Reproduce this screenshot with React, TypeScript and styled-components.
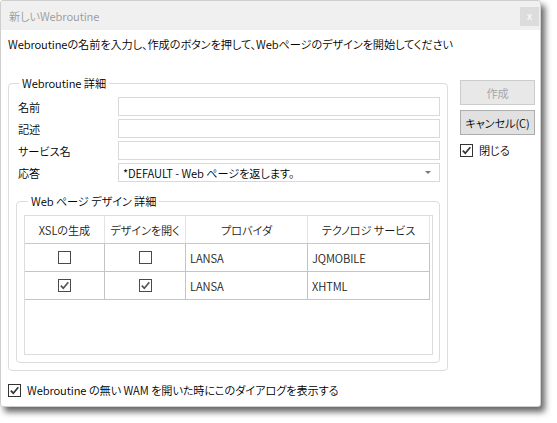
import React from 'react';
import styled, { createGlobalStyle } from 'styled-components';

const Global = createGlobalStyle`
  html, body { margin: 0; padding: 0; background: #fff; }
  body {
    font-family: "Noto Sans CJK JP", "Noto Sans", sans-serif;
    font-size: 11.2px;
    font-weight: 350;
    letter-spacing: -0.1px;
    color: #000;
    font-feature-settings: "palt";
  }
  * { box-sizing: border-box; }
`;

const Page = styled.div`
  width: 557px;
  height: 423px;
  background: #fff;
`;

const Window = styled.div`
  width: 541px;
  height: 407px;
  background: #fff;
  border: 1px solid #cfcfcf;
  border-radius: 3px;
  box-shadow: 4px 5px 6px rgba(0, 0, 0, 0.6);
  display: flex;
  flex-direction: column;
  overflow: hidden;
`;

const TitleBar = styled.div`
  height: 29px;
  background: #f0f0f0;
  display: flex;
  align-items: center;
  padding-left: 8px;
  flex-shrink: 0;
`;

const Title = styled.span`
  color: #9a9a9a;
  line-height: 16px;
`;

const CloseBtn = styled.div`
  margin-left: auto;
  margin-right: 1px;
  margin-top: 2px;
  width: 19px;
  height: 19px;
  background: #dcdcdc;
  color: #f6f6f6;
  font-size: 10px;
  font-family: "Liberation Sans", sans-serif;
  font-weight: bold;
  display: flex;
  align-items: center;
  justify-content: center;
`;

const Body = styled.div`
  display: flex;
  flex-direction: column;
  padding: 6px 0 0 7px;
`;

const Instruction = styled.div`
  line-height: 16px;
  white-space: nowrap;
`;

const MainRow = styled.div`
  display: flex;
  align-items: flex-start;
  gap: 12px;
  margin-top: 23px;
`;

const Group = styled.fieldset<{ $w?: number }>`
  margin: 0;
  min-width: 0;
  border: 1px solid #dcdcdc;
  border-radius: 4px;
  padding: 0 7px 7px 7px;
  ${(p) => (p.$w ? `width: ${p.$w}px;` : '')}
`;

const InnerGroup = styled(Group)`
  margin-top: 11px;
  padding: 0 6px 7px 7px;
`;

const Legend = styled.legend<{ $ml: number }>`
  padding: 0 3px;
  margin-left: ${(p) => p.$ml}px;
  line-height: 16px;
`;

const Fields = styled.div`
  display: flex;
  flex-direction: column;
  gap: 3px;
  padding-top: 6px;
`;

const FieldRow = styled.div`
  display: flex;
  align-items: center;
`;

const Label = styled.div`
  width: 102px;
  padding-left: 2px;
  line-height: 16px;
`;

const TextBox = styled.div`
  flex: 1;
  height: 19px;
  border: 1px solid #d9d9d9;
  background: #fff;
`;

const Select = styled.div`
  flex: 1;
  height: 19px;
  border: 1px solid #d9d9d9;
  background: #fff;
  display: flex;
  align-items: center;
  padding: 0 8px 0 4px;
`;

const SelectText = styled.span`
  flex: 1;
  line-height: 16px;
  white-space: nowrap;
`;

const Arrow = styled.span`
  width: 0;
  height: 0;
  border-left: 3px solid transparent;
  border-right: 3px solid transparent;
  border-top: 3px solid #7a7a7a;
`;

const List = styled.div`
  height: 140px;
  margin-top: 6px;
  border: 1px solid #dcdcdc;
  background: #fff;
  display: flex;
  flex-direction: column;
`;

const GridRow = styled.div<{ $header?: boolean }>`
  display: grid;
  grid-template-columns: 80px 81px 122px 122px;
  height: 28px;
  border-bottom: 1px solid ${(p) => (p.$header ? '#c8c8c8' : '#c4c4c4')};
  width: 405px;
`;

const HeadCell = styled.div`
  display: flex;
  align-items: center;
  justify-content: center;
  border-right: 1px solid #e4e4e4;
  line-height: 16px;
  color: #1a1a1a;
`;

const Cell = styled.div<{ $center?: boolean }>`
  display: flex;
  align-items: center;
  justify-content: ${(p) => (p.$center ? 'center' : 'flex-start')};
  padding-left: ${(p) => (p.$center ? '0' : '4px')};
  border-right: 1px solid #c4c4c4;
  line-height: 16px;
  color: #1a1a1a;
`;

const Side = styled.div`
  display: flex;
  flex-direction: column;
  padding-top: 5px;
`;

const Button = styled.div<{ $disabled?: boolean }>`
  width: 75px;
  height: 25px;
  display: flex;
  align-items: center;
  justify-content: center;
  background: ${(p) => (p.$disabled ? '#e8e8e8' : '#e1e1e1')};
  border: 1px solid ${(p) => (p.$disabled ? '#cccccc' : '#adadad')};
  color: ${(p) => (p.$disabled ? '#a3a3a3' : '#000')};
  line-height: 16px;
  & + & {
    margin-top: 5px;
  }
`;

const CheckRow = styled.div<{ $mt: number }>`
  display: flex;
  align-items: center;
  height: 16px;
  margin-top: ${(p) => p.$mt}px;
  gap: 6px;
  line-height: 16px;
  white-space: nowrap;
`;

const Box = styled.span<{ $soft?: boolean }>`
  width: 13px;
  height: 13px;
  border: 1px solid ${(p) => (p.$soft ? '#4a4a4a' : '#333')};
  background: #fff;
  display: inline-flex;
  flex-shrink: 0;
`;

function Check({ checked, soft }: { checked?: boolean; soft?: boolean }) {
  return (
    <Box $soft={soft}>
      {checked && (
        <svg width="11" height="11" viewBox="0 0 11 11">
          <path
            d="M1.8 5.6 L4.3 8.2 L9.3 2.3"
            fill="none"
            stroke={soft ? '#555' : '#333'}
            strokeWidth="1.7"
          />
        </svg>
      )}
    </Box>
  );
}

const rows = [
  { xsl: false, open: false, provider: 'LANSA', tech: 'JQMOBILE' },
  { xsl: true, open: true, provider: 'LANSA', tech: 'XHTML' },
];

export default function App() {
  return (
    <Page>
      <Global />
      <Window>
        <TitleBar>
          <Title>新しいWebroutine</Title>
          <CloseBtn>x</CloseBtn>
        </TitleBar>
        <Body>
          <Instruction>
            Webroutineの名前を入力し、作成のボタンを押して、Webページのデザインを開始してください
          </Instruction>
          <MainRow>
            <Group $w={440}>
              <Legend $ml={3}>Webroutine 詳細</Legend>
              <Fields>
                <FieldRow>
                  <Label>名前</Label>
                  <TextBox />
                </FieldRow>
                <FieldRow>
                  <Label>記述</Label>
                  <TextBox />
                </FieldRow>
                <FieldRow>
                  <Label>サービス名</Label>
                  <TextBox />
                </FieldRow>
                <FieldRow>
                  <Label>応答</Label>
                  <Select>
                    <SelectText>*DEFAULT - Web ページを返します。</SelectText>
                    <Arrow />
                  </Select>
                </FieldRow>
              </Fields>
              <InnerGroup>
                <Legend $ml={4}>Web ページ デザイン 詳細</Legend>
                <List>
                  <GridRow $header>
                    <HeadCell>XSLの生成</HeadCell>
                    <HeadCell>デザインを開く</HeadCell>
                    <HeadCell>プロバイダ</HeadCell>
                    <HeadCell>テクノロジ サービス</HeadCell>
                  </GridRow>
                  {rows.map((r, i) => (
                    <GridRow key={i}>
                      <Cell $center>
                        <Check checked={r.xsl} soft />
                      </Cell>
                      <Cell $center>
                        <Check checked={r.open} soft />
                      </Cell>
                      <Cell>{r.provider}</Cell>
                      <Cell>{r.tech}</Cell>
                    </GridRow>
                  ))}
                </List>
              </InnerGroup>
            </Group>
            <Side>
              <Button $disabled>作成</Button>
              <Button>キャンセル(C)</Button>
              <CheckRow $mt={7}>
                <Check checked />
                <span>閉じる</span>
              </CheckRow>
            </Side>
          </MainRow>
          <CheckRow $mt={11}>
            <Check checked />
            <span>Webroutine の無い WAM を開いた時にこのダイアログを表示する</span>
          </CheckRow>
        </Body>
      </Window>
    </Page>
  );
}
